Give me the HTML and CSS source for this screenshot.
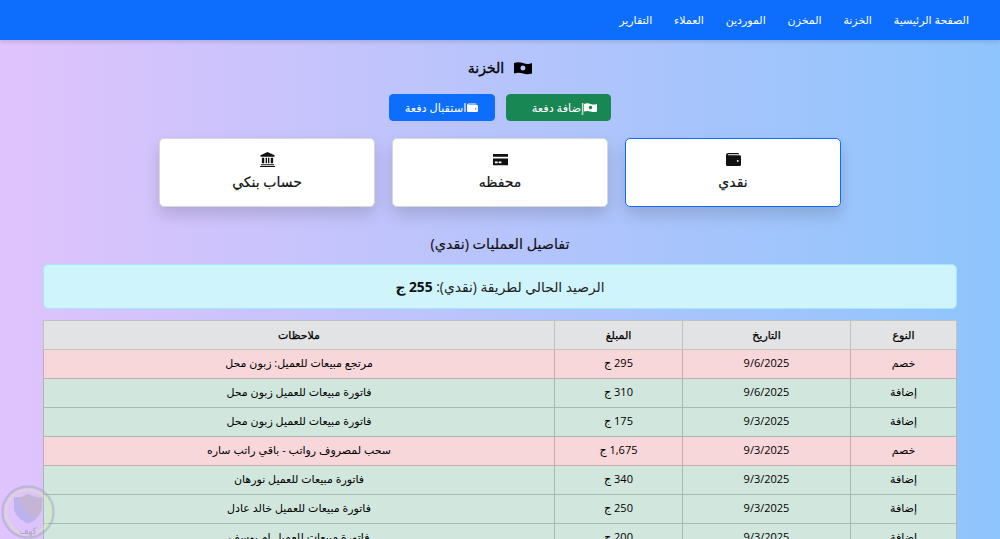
FILE: index.html
```html
<!DOCTYPE html>
<html lang="ar" dir="rtl">
<head>
<meta charset="utf-8">
<title>الخزنة</title>
<link rel="stylesheet" href="styles.css">
</head>
<body>
<nav class="navbar">
  <a href="#">الصفحة الرئيسية</a>
  <a href="#">الخزنة</a>
  <a href="#">المخزن</a>
  <a href="#">الموردين</a>
  <a href="#">العملاء</a>
  <a href="#">التقارير</a>
</nav>
<main class="page">
  <h1 class="title">
    <svg class="ic-title" viewBox="0 0 18 14" fill="currentColor"><path fill-rule="evenodd" d="M0 2C3 1 6 1 9 2s6 1.500 9 0v10.500c-3 1-6 1-9 0s-6-1-9 0zM9 4.500a2.500 2.500 0 1 0 0 5 2.500 2.500 0 0 0 0-5z"/></svg>
    <span>الخزنة</span>
  </h1>
  <div class="actions">
    <button class="btn btn-green"><svg class="ic-btn" viewBox="0 0 18 14" fill="currentColor"><path fill-rule="evenodd" d="M0 2C3 1 6 1 9 2s6 1.500 9 0v10.500c-3 1-6 1-9 0s-6-1-9 0zM9 4.500a2.500 2.500 0 1 0 0 5 2.500 2.500 0 0 0 0-5z"/></svg><span>إضافة دفعة</span></button>
    <button class="btn btn-blue"><svg class="ic-btn" viewBox="0 0 16 16" fill="currentColor"><path fill-rule="evenodd" d="M2.500 2h10A1.500 1.500 0 0 1 14 3.500H2.500a.5.5 0 0 0 0 1h12A1.500 1.500 0 0 1 16 6v7a1.500 1.500 0 0 1-1.500 1.500h-13A1.500 1.500 0 0 1 0 13V4.500A2.500 2.500 0 0 1 2.500 2zm10 7a1 1 0 1 0 0 2 1 1 0 0 0 0-2z"/></svg><span>استقبال دفعة</span></button>
  </div>
  <div class="cards">
    <div class="card card-active">
      <svg class="ic-card" viewBox="0 0 16 16" fill="currentColor"><path fill-rule="evenodd" d="M2.500 1h10A1.500 1.500 0 0 1 14 2.500H2.500a.5.5 0 0 0 0 1h12A1.500 1.500 0 0 1 16 5v8.500a1.500 1.500 0 0 1-1.500 1.500h-13A1.500 1.500 0 0 1 0 13.500v-10A2.500 2.500 0 0 1 2.500 1zm10 7.500a1 1 0 1 0 0 2 1 1 0 0 0 0-2z"/></svg>
      <span>نقدي</span>
    </div>
    <div class="card">
      <svg class="ic-card" viewBox="0 0 16 16" fill="currentColor"><path fill-rule="evenodd" d="M0 2h16v3H0zM0 7h16v7H0zm2 3v2h3v-2zm4 0v2h3v-2z"/></svg>
      <span>محفظه</span>
    </div>
    <div class="card">
      <svg class="ic-card" viewBox="0 0 16 16" fill="currentColor"><path fill-rule="evenodd" d="M8 0l7.500 3.500V5H.5V3.500zM2 6h2.500v6H2zm4 0h1.500v6H6zm2.500 0H10v6H8.500zM11.500 6H14v6h-2.500zM1 13h14v1H1zM0 15h16v1H0z"/></svg>
      <span>حساب بنكي</span>
    </div>
  </div>
  <h2 class="section-title">تفاصيل العمليات (نقدي)</h2>
  <div class="alert">الرصيد الحالي لطريقة (نقدي): <strong>255 ج</strong></div>
  <table class="ledger">
    <thead>
      <tr><th class="c-type">النوع</th><th class="c-date">التاريخ</th><th class="c-amount">المبلغ</th><th>ملاحظات</th></tr>
    </thead>
    <tbody>
      <tr class="minus"><td>خصم</td><td>9/6/2025</td><td>295 ج</td><td>مرتجع مبيعات للعميل: زبون محل</td></tr>
      <tr class="plus"><td>إضافة</td><td>9/6/2025</td><td>310 ج</td><td>فاتورة مبيعات للعميل زبون محل</td></tr>
      <tr class="plus"><td>إضافة</td><td>9/3/2025</td><td>175 ج</td><td>فاتورة مبيعات للعميل زبون محل</td></tr>
      <tr class="minus"><td>خصم</td><td>9/3/2025</td><td>1,675 ج</td><td>سحب لمصروف رواتب - باقي راتب ساره</td></tr>
      <tr class="plus"><td>إضافة</td><td>9/3/2025</td><td>340 ج</td><td>فاتورة مبيعات للعميل نورهان</td></tr>
      <tr class="plus"><td>إضافة</td><td>9/3/2025</td><td>250 ج</td><td>فاتورة مبيعات للعميل خالد عادل</td></tr>
      <tr class="plus"><td>إضافة</td><td>9/3/2025</td><td>200 ج</td><td>فاتورة مبيعات للعميل ام يوسف</td></tr>
    </tbody>
  </table>
</main>
<div class="watermark">
  <svg viewBox="0 0 54 54" width="54" height="54">
    <circle cx="27" cy="27" r="25.500" fill="none" stroke="#9aa6b8" stroke-width="2.500" opacity=".55"/>
    <circle cx="27" cy="27" r="22" fill="none" stroke="#dfe8b0" stroke-width="2.500" opacity=".55"/>
    <path d="M27 9c4 2.500 9 3.500 14 3.500v9c0 8-6 13-14 17-8-4-14-9-14-17v-9c5 0 10-1 14-3.500z" fill="#a9a5a8" opacity=".55"/>
    <path d="M18 12c2 9 8 16 17 22-2 2-5 3-8 4.500-8-4-14-9-14-17v-9z" fill="#b4aef0" opacity=".85"/>
    <text x="27" y="49" text-anchor="middle" class="watermark-text">كهف</text>
  </svg>
</div>
</body>
</html>
```
FILE: styles.css
```css
* { box-sizing: border-box; }
html, body { height: 539px; overflow: hidden; }
body {
  margin: 0;
  font-family: "Open Sans", "DejaVu Sans", sans-serif;
  font-size: 12px;
  color: #212529;
  background: linear-gradient(to right, #e0c3fc, #8ec5fc);
}
.navbar {
  height: 40px;
  background: #0d6efd;
  box-shadow: 0 2px 4px rgba(0,0,0,.12);
  display: flex;
  align-items: center;
  gap: 21.800px;
  padding: 0 31px 2px;
}
.navbar a { color: #fff; text-decoration: none; font-size: 11px; }
.page { padding: 0 43px; display: flex; flex-direction: column; }
.title {
  margin: 17px 0 0;
  height: 21px;
  display: flex;
  justify-content: center;
  align-items: center;
  gap: 10px;
  font-weight: 400;
  -webkit-text-stroke: .35px #000;
  color: #000;
}
.title span { font-size: 14px; }
.ic-title { width: 18px; height: 14px; }
.ic-btn { width: 13px; height: 11px; }
.ic-card { width: 15px; height: 15px; }
.actions { display: flex; justify-content: center; gap: 11px; margin-top: 16px; }
.btn {
  height: 27px;
  width: 106px;
  border-radius: 4px;
  border: 1px solid;
  color: #fff;
  font: inherit;
  font-size: 11.300px;
  display: flex;
  align-items: center;
  justify-content: center;
  padding: 0;
}
.btn-green { background: #198754; border-color: #198754; padding-left: 12px; width: 105px; }
.btn-blue { background: #0d6efd; border-color: #0d6efd; }
.cards { display: flex; justify-content: center; gap: 17px; margin-top: 17px; }
.card {
  width: 216px;
  height: 69px;
  background: #fff;
  border: 1px solid #d8d8d8;
  border-radius: 5px;
  box-shadow: 0 .5rem 1rem rgba(0,0,0,.15);
  display: flex;
  flex-direction: column;
  align-items: center;
  padding-top: 13px;
  gap: 5px;
  font-size: 14px;
  font-weight: 400;
  -webkit-text-stroke: .2px #111;
  color: #111;
}
.card-active { border-color: #0d6efd; }
.section-title { margin: 27px 0 0; height: 19px; line-height: 19px; text-align: center; font-size: 14.300px; font-weight: 400; -webkit-text-stroke: .15px #111; color: #111; }
.alert {
  margin-top: 11px;
  height: 45px;
  line-height: 44px;
  background: #cff4fc;
  border: 1px solid #9eeaf9;
  border-radius: 5px;
  text-align: center;
  font-size: 13.800px;
  color: #222;
}
.alert strong { color: #111; }
.ledger {
  margin-top: 11px;
  width: 914px;
  border-collapse: collapse;
  table-layout: fixed;
  font-size: 11px;
  color: #000;
}
.ledger th, .ledger td { height: 29px; padding: 0 6px 3px; text-align: center; border: 1px solid #b5bcb8; line-height: 25px; }
.ledger thead tr, .ledger tbody tr { height: 29px; }
.ledger th { background: #e2e3e5; font-weight: 400; -webkit-text-stroke: .25px #000; border-color: #c4c2bd; padding-bottom: 1px; }
.c-type { width: 106px; }
.c-date { width: 168px; }
.c-amount { width: 128px; }
.minus td { background: #f8d7da; border-color: #c6acae; }
.plus td { background: #d1e7dd; border-color: #a7b9b1; }
.watermark { position: fixed; left: 1px; bottom: 0; width: 54px; height: 54px; opacity: .85; }
.watermark-text { font-size: 9px; fill: #a29ac4; }
```
